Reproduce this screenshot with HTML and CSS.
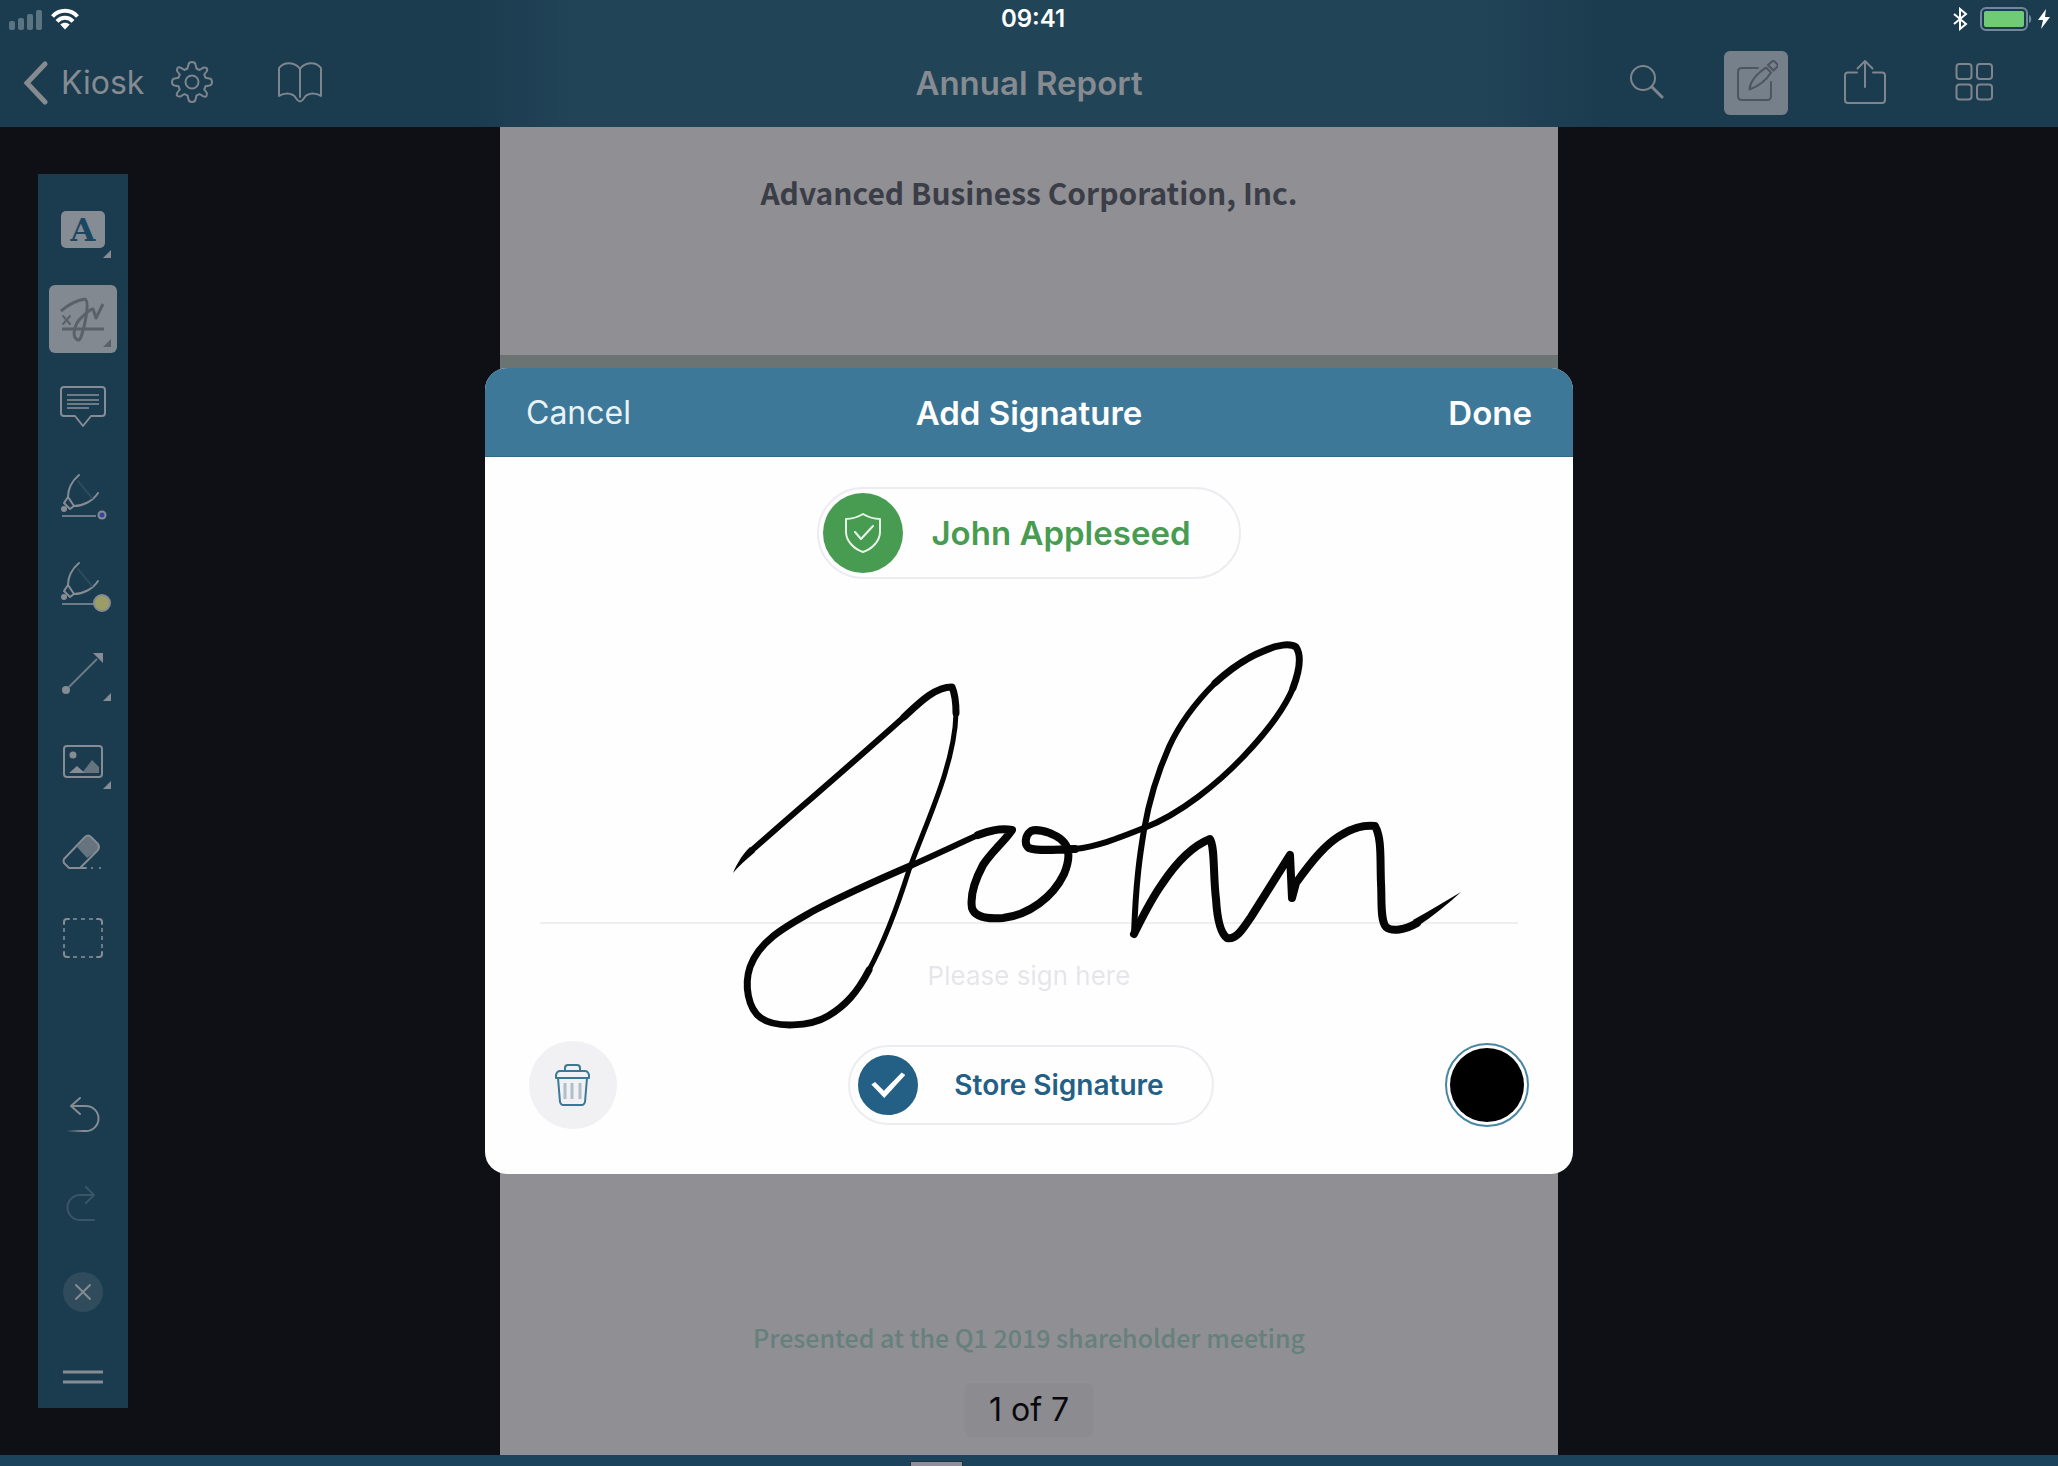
FILE: index.html
```html
<!DOCTYPE html>
<html lang="en">
<head>
<meta charset="utf-8">
<meta name="viewport" content="width=device-width, initial-scale=1">
<title>Annual Report</title>
<link rel="stylesheet" href="styles.css">
</head>
<body>
<div class="app">
  <header class="topbar">
    <div class="status">
      <div class="status-side">
        <svg class="signal" width="36" height="22" viewBox="0 0 36 22" aria-hidden="true"><rect x="1" y="13" width="6" height="9" rx="2"/><rect x="10" y="10" width="6" height="12" rx="2"/><rect x="19" y="6" width="6" height="16" rx="2"/><rect x="28" y="2" width="6" height="20" rx="2"/></svg>
        <svg class="wifi" width="30" height="22" viewBox="0 0 30 22" aria-hidden="true"><path class="arc" d="M2.5 8.5C9.500 .9 20.500 .9 27.500 8.500M7 13.300C11.500 8.500 18.500 8.500 23 13.300"/><path d="M15 21.500L10.300 16.500C13 14.100 17 14.100 19.700 16.500Z"/></svg>
      </div>
      <time class="clock">09:41</time>
      <div class="status-side status-end">
        <svg width="16" height="24" viewBox="0 0 16 24" aria-hidden="true"><path class="bt" d="M2 7L14 17L8 22V2L14 7L2 17"/></svg>
        <svg width="52" height="24" viewBox="0 0 52 24" aria-hidden="true"><rect class="cell" x="1" y="1" width="46" height="22" rx="5"/><rect class="charge" x="4" y="4" width="40" height="16" rx="2"/><path class="cap" d="M49 8C52 9 52 15 49 16Z"/></svg>
        <svg width="12" height="20" viewBox="0 0 12 20" aria-hidden="true"><path class="bolt" d="M8 0L0 11H5L3 20L12 8H7Z"/></svg>
      </div>
    </div>
    <nav class="nav">
      <div class="nav-left">
        <a class="back" href="#"><svg width="26" height="44" viewBox="0 0 26 44" aria-hidden="true"><path d="M22 3L4 22L22 41"/></svg>Kiosk</a>
        <button class="icon-button gear" aria-label="Settings"><svg width="42" height="42" viewBox="-21 -21 42 42"><circle r="6.500"/><path d="M-3.500 -17.500Q-3 -20 0 -20T3.500 -17.500L4.500 -13.500Q6.500 -12.500 7.500 -12L11 -14.200Q13 -15 14.500 -14T14.600 -10.500L12.200 -7.500Q13 -6 13.500 -4.200L17.500 -3.500Q20 -3 20 0T17.500 3.500L13.500 4.200Q13 6 12.200 7.500L14.600 10.500Q15.500 12.500 14.500 14T11 14.200L7.500 12Q6.500 12.800 4.500 13.500L3.500 17.500Q3 20 0 20T-3.500 17.500L-4.500 13.500Q-6.500 12.800 -7.500 12L-11 14.200Q-13 15 -14.500 14T-14.600 10.500L-12.200 7.500Q-13 6 -13.500 4.200L-17.500 3.500Q-20 3 -20 0T-17.500 -3.500L-13.500 -4.200Q-13 -6 -12.200 -7.500L-14.600 -10.500Q-15.500 -12.500 -14.500 -14T-11 -14.200L-7.500 -12Q-6.500 -12.800 -4.500 -13.500Z"/></svg></button>
        <button class="icon-button" aria-label="Reader view"><svg width="44" height="42" viewBox="-22 -21 44 42"><path d="M0 -13C-5 -20.500 -16 -20.500 -21 -14V14C-17 11 -11 11 -7 13C-4 14 -4 19 0 19.500C4 19 4 14 7 13C11 11 17 11 21 14V-14C16 -20.500 5 -20.500 0 -13V15"/></svg></button>
      </div>
      <h1 class="doc-title">Annual Report</h1>
      <div class="nav-right">
        <button class="icon-button" aria-label="Search"><svg width="34" height="34" viewBox="0 0 34 34"><circle cx="13" cy="13" r="12"/><path class="thick" d="M22 22L32 32"/></svg></button>
        <button class="icon-button active" aria-label="Annotate" aria-pressed="true"><svg width="44" height="44" viewBox="-22 -22 44 44"><path d="M2 -14H-14Q-18 -14 -18 -10V14Q-18 18 -14 18H11Q15 18 15 14V0M10 -14.500L15 -9.500C11 -3 3 4 -6.500 7.500C-6 -1 2 -9 10 -14.500ZM12 -17L16.500 -21Q17.500 -21.500 18.500 -20.500L21.500 -17.500Q22 -16.500 21.500 -15.500L17.500 -11.500Z"/></svg></button>
        <button class="icon-button" aria-label="Share"><svg width="44" height="46" viewBox="-22 -25 44 46"><path d="M-8 -11.500H-17Q-20 -11.500 -20 -8.500V16Q-20 19 -17 19H17Q20 19 20 16V-8.500Q20 -11.500 17 -11.500H8M0 3V-23M-7.500 -15.500L0 -23L7.500 -15.500"/></svg></button>
        <button class="icon-button" aria-label="Thumbnails"><svg width="40" height="40" viewBox="-20 -20 40 40"><rect x="-17.500" y="-18" width="15" height="15" rx="3"/><rect x="3" y="-18" width="15" height="15" rx="3"/><rect x="-17.500" y="2.500" width="15" height="15" rx="3"/><rect x="3" y="2.500" width="15" height="15" rx="3"/></svg></button>
      </div>
    </nav>
  </header>

  <main class="workspace">
    <div class="toolbar" role="toolbar" aria-label="Annotation tools">
      <button class="tool" aria-label="Text"><svg viewBox="-34 -34 68 68"><rect class="fill" x="-22" y="-19" width="44" height="37" rx="5"/><text class="glyph" x="0" y="11" text-anchor="middle">A</text><path class="fill" d="M20 28H28V20Z"/></svg></button>
      <button class="tool selected" aria-label="Signature" aria-pressed="true"><svg viewBox="-34 -34 68 68"><path class="mid" d="M-22 -8C-14 -15 -4 -19 2 -20C8 -17 -1 20 -4 21C-13 20 -8 4 -2 -1C4 -7 8 -10 10 -10L13 -1L20 -15M-21 10H21"/><path d="M-20 -3L-13 5M-13 -3L-20 5"/><path class="fill" d="M20 28H28V20Z"/></svg></button>
      <button class="tool" aria-label="Note"><svg viewBox="-34 -34 68 68"><path d="M-19 -20H19Q22 -20 22 -17V6Q22 9 19 9H8L0 19L-8 9H-19Q-22 9 -22 6V-17Q-22 -20 -19 -20Z"/><path class="soft" d="M-16 -12H16M-16 -7H16M-16 -3H16M-16 1H6"/></svg></button>
      <button class="tool" aria-label="Pen"><svg viewBox="-34 -34 68 68"><path d="M-4 -21C-11 -15 -15 -8 -15 1L-19 7L-13 13L-9 10C0 10 10 5 15 -3M-15 1L-9 10"/><path class="faint" d="M-5 -15L9 2"/><circle class="fill" cx="-19" cy="13" r="3"/><path class="soft" d="M-21 20H13"/><circle class="fill" cx="19" cy="19" r="4.500"/><circle class="blue" cx="19" cy="19" r="2.500"/></svg></button>
      <button class="tool" aria-label="Highlighter"><svg viewBox="-34 -34 68 68"><path d="M-4 -21C-11 -15 -15 -8 -15 1L-19 7L-13 13L-9 10C0 10 10 5 15 -3M-15 1L-9 10"/><path class="faint" d="M-5 -15L9 2"/><circle class="fill" cx="-19" cy="13" r="3"/><path class="soft" d="M-21 20H13"/><circle class="yellow" cx="19" cy="19" r="8"/></svg></button>
      <button class="tool" aria-label="Line"><svg viewBox="-34 -34 68 68"><path class="soft" d="M-14 14L14 -14"/><circle class="fill" cx="-17" cy="17" r="4"/><path class="fill" d="M10 -20H20V-10ZM20 28H28V20Z"/></svg></button>
      <button class="tool" aria-label="Image"><svg viewBox="-34 -34 68 68"><rect x="-19" y="-15" width="38" height="31" rx="3"/><circle class="fill" cx="-10" cy="-6" r="3.500"/><path class="fill dim" d="M-1 12L9 -1L16 6V12Z"/><path class="fill" d="M-14 12L-6 5L2 12ZM20 28H28V20Z"/></svg></button>
      <button class="tool" aria-label="Eraser"><svg viewBox="-34 -34 68 68"><path class="fill dim" d="M-6 -3L3 -13Q5 -15 8 -13L15 -6Q17 -3 15 0L4 8Z"/><path d="M-19 9L2 -13Q5 -16 8 -13L15 -6Q17 -3 15 0L-3 18H-14L-19 13Q-20 11 -19 9ZM-14 18H3"/><path class="soft" d="M8 18H10M16 18H18"/></svg></button>
      <button class="tool" aria-label="Select"><svg viewBox="-34 -34 68 68"><path d="M-19 -14V-16Q-19 -19 -16 -19H-14M14 -19H16Q19 -19 19 -16V-14M19 14V16Q19 19 16 19H14M-14 19H-16Q-19 19 -19 16V14"/><path class="soft" d="M-10 -19H-6M-2 -19H2M6 -19H10M-10 19H-6M-2 19H2M6 19H10M-19 -10V-6M-19 -2V2M-19 6V10M19 -10V-6M19 -2V2M19 6V10"/></svg></button>
      <span class="tool-space"></span>
      <button class="tool" aria-label="Undo"><svg viewBox="-34 -34 68 68"><defs><linearGradient id="tail" gradientUnits="userSpaceOnUse" x1="-17" y1="0" x2="0" y2="0"><stop offset="0" stop-color="#858c93" stop-opacity="0"/><stop offset="1" stop-color="#858c93"/></linearGradient></defs><path d="M-3 -17L-12 -9L-3 -1M-12 -9H3A12.500 12.500 0 0 1 3 16H0"/><path class="tail" d="M0 16.010L-16 16"/></svg></button>
      <button class="tool muted" aria-label="Redo"><svg viewBox="-34 -34 68 68"><path d="M3 -16L11 -8L3 0M11 -8H-3A12.500 12.500 0 0 0 -3 17H11"/></svg></button>
      <button class="tool" aria-label="Close"><svg viewBox="-34 -34 68 68"><circle class="disc" r="20"/><path d="M-7 -7L7 7M7 -7L-7 7"/></svg></button>
      <button class="tool handle" aria-label="Move toolbar"><svg viewBox="-34 -34 68 68"><path class="mid" d="M-20 0H20M-20 10H20"/></svg></button>
    </div>

    <article class="document">
      <section class="sheet sheet-head"><h2 class="company">Advanced Business Corporation, Inc.</h2></section>
      <section class="sheet sheet-foot">
        <p class="meeting">Presented at the Q1 2019 shareholder meeting</p>
        <p class="page-count">1 of 7</p>
      </section>
    </article>
  </main>
  <footer class="scrubber"><span class="thumb"></span></footer>
</div>

<div class="overlay">
  <form class="dialog" role="dialog" aria-label="Add Signature">
    <header class="dialog-head">
      <button type="button" class="text-button">Cancel</button>
      <h2 class="dialog-title">Add Signature</h2>
      <button type="button" class="text-button done">Done</button>
    </header>
    <div class="dialog-body">
      <button type="button" class="pill signer">
        <span class="badge"><svg width="36" height="40" viewBox="0 0 36 40" aria-hidden="true"><path d="M18 1C13 4 7 6 1 6V19C1 28 9 36 18 39C27 36 35 28 35 19V6C29 6 23 4 18 1ZM10 19L16 26L28 13"/></svg></span>
        John Appleseed
      </button>
      <div class="pad">
        <p class="hint">Please sign here</p>
        <svg class="ink" viewBox="485 579 1088 462" aria-label="Signature">
          <path class="tip" d="M733 873C736 865 742 855 750 847L755 852C747 859 740 865 733 873Z"/>
          <path class="w6" d="M751 851C792 815 864 753 904 717"/>
          <path class="w7" d="M904 717C920 702 935 687 952 687C955 694 956 704 956 713"/>
          <path class="w5" d="M956 713C955 765 925 825 909 870C897 908 883 944 869 970"/>
          <path class="w7" d="M869 970C857 993 845 1006 828 1016C810 1027 775 1028 761 1018C748 1009 744 985 750 967C760 939 789 925 815 910C850 892 882 878 910 866"/>
          <path class="w6" d="M910 866C935 855 960 843 978 835"/>
          <path class="w8" d="M978 835C991 830 1002 828 1012 830C1004 842 992 851 983 865C975 880 970 896 972 908C975 918 990 919 1003 918C1029 915 1053 897 1064 874C1072 855 1069 843 1056 836C1046 831 1036 829 1031 831C1025 835 1024 845 1029 848C1036 851 1055 850 1075 849"/>
          <path class="w6" d="M1075 849C1100 846 1121 837 1144 828C1181 814 1219 782 1242 758C1264 735 1284 710 1293 688"/>
          <path class="w7" d="M1293 688C1299 672 1302 656 1296 647C1290 643 1277 645 1266 650C1245 658 1229 670 1215 683"/>
          <path class="w6" d="M1215 683C1194 704 1179 725 1169 747C1157 774 1149 801 1144 830C1140 854 1136 880 1134 934"/>
          <path class="w8" d="M1134 934C1141 920 1150 901 1162 884C1176 863 1192 846 1210 839C1215 847 1213 875 1216 899C1217 916 1220 933 1227 938C1236 940 1243 929 1251 917C1264 896 1277 876 1290 855L1292 898L1296 883C1311 862 1326 843 1343 834C1353 828 1365 825 1375 826C1382 838 1380 860 1381 883C1382 900 1380 920 1386 927C1392 932 1405 930 1417 923"/>
          <path class="tip" d="M1413 920C1430 911 1445 901 1461 892C1448 904 1433 916 1418 926Z"/>
        </svg>
      </div>
      <div class="actions">
        <button type="button" class="trash" aria-label="Clear signature"><svg width="36" height="42" viewBox="0 0 36 42"><path d="M10 7V4Q10 1 13 1H22Q25 1 25 4V7M5 7H30Q33 7 34 11V14H1V11Q2 7 5 7ZM3 14L5 38Q6 41 8 41H27Q29 41 30 38L32 14"/><path class="slats" d="M10 19V35M17 19V35M25 19V35"/></svg></button>
        <label class="pill store"><input class="store-input" type="checkbox" checked>Store Signature</label>
        <button type="button" class="swatch" aria-label="Ink colour: black"><span class="swatch-dot"></span></button>
      </div>
    </div>
  </form>
</div>
</body>
</html>
```

FILE: styles.css
```css
:root {
  --bar: #1b3b4f;
  --icon: #7e858c;
  --blue: #246085;
  --green: #489c51;
}

* { box-sizing: border-box; }

body {
  margin: 0;
  background: #0f1016;
  font-family: Inter, "Liberation Sans", sans-serif;
  font-size: 32px;
  line-height: 40px;
}

h1, h2, p { margin: 0; font-size: inherit; font-weight: inherit; }

button {
  margin: 0;
  padding: 0;
  border: 0;
  background: none;
  color: inherit;
  font: inherit;
  cursor: pointer;
}

svg { display: block; fill: none; }

.app {
  display: flex;
  flex-direction: column;
  min-height: 100vh;
}

/* Status and navigation bars */
.topbar {
  background: linear-gradient(90deg, var(--bar) 23%, #224457 28%, #224457 72%, var(--bar) 78%);
}

.status {
  display: grid;
  grid-template-columns: 1fr auto 1fr;
  align-items: center;
  height: 38px;
  padding: 0 8px;
  color: #fff;
}

.status-side { display: flex; align-items: center; gap: 6px; }
.status-end { justify-content: flex-end; }
.signal { fill: #5a7482; }
.wifi { fill: #fff; }
.arc { fill: none; stroke: #fff; stroke-width: 4; }
.bt { stroke: #fff; stroke-width: 2; }
.status-end svg:first-child { margin-right: 6px; }
.cell { stroke: #71889a; stroke-width: 2; }
.charge { fill: #70cb75; }
.cap { fill: #71889a; }
.bolt { fill: #fff; }
.clock {
  padding-left: 8px;
  font-size: 24px;
  font-weight: 600;
  line-height: 32px;
}

.nav {
  display: grid;
  grid-template-columns: 1fr auto 1fr;
  align-items: center;
  height: 89px;
  color: #858b91;
}

.nav-left { display: flex; align-items: center; padding-left: 23px; }
.nav-right { display: flex; justify-content: flex-end; gap: 45px; padding-right: 52px; }

.back {
  display: flex;
  align-items: center;
  gap: 12px;
  color: inherit;
  text-decoration: none;
}
.back svg { stroke: currentColor; stroke-width: 5; stroke-linecap: round; }

.icon-button {
  display: flex;
  align-items: center;
  justify-content: center;
  width: 64px;
  height: 64px;
  padding-bottom: 2px;
  border-radius: 6px;
}
.icon-button svg { stroke: var(--icon); stroke-width: 2; stroke-linecap: round; stroke-linejoin: round; }
.icon-button .thick { stroke-width: 3; }
.icon-button.gear { margin: 0 44px 0 16px; }
.icon-button.active { background: #76808a; }
.icon-button.active svg { stroke: #4c5560; }

.doc-title { font-size: 33px; font-weight: 600; }

/* Document area */
.workspace {
  flex: 1;
  display: grid;
  grid-template-columns: 1fr minmax(0, 1058px) 1fr;
}

.toolbar {
  display: flex;
  flex-direction: column;
  width: 90px;
  margin: 47px 38px;
  padding-top: 12px;
  background: var(--bar);
}

.tool {
  flex: 1;
  display: flex;
  align-items: center;
  justify-content: center;
}
.tool-space { flex: 1; }
.tool.handle { flex: 0 0 72px; }
.tool svg {
  width: 68px;
  height: 68px;
  border-radius: 6px;
  stroke: #858c93;
  stroke-width: 2;
  stroke-linecap: round;
  stroke-linejoin: round;
}
.tool .fill { fill: #858c93; stroke: none; }
.tool .dim { fill: #66747f; }
.tool .soft { stroke: #6d7b86; stroke-linecap: butt; }
.tool .faint { stroke: #2c4b5d; }
.tool .mid { stroke-width: 3; stroke-linecap: butt; }
.tool .disc { fill: #2f4b5c; stroke: none; }
.tool .blue { fill: #3a44a0; stroke: none; }
.tool .yellow { fill: #9c9c66; stroke: #858c93; }
.tool .tail { stroke: url(#tail); }
.tool .glyph {
  fill: #1b4860;
  stroke: none;
  font-family: "DejaVu Serif", serif;
  font-size: 32px;
  font-weight: 700;
}
.tool.selected svg { background: #838990; stroke: #5b6169; }
.tool.selected .fill { fill: #5b6169; }
.tool.muted svg { stroke: #3a5566; }

.document {
  grid-column: 2;
  display: flex;
  flex-direction: column;
  gap: 20px;
  background: #6b7473;
}

.sheet {
  background: #8f8f94;
  font-family: "Noto Sans CJK SC", "Noto Sans", sans-serif;
  text-align: center;
}
.sheet-head { height: 228px; padding-top: 45px; }
.sheet-foot {
  flex: 1;
  display: flex;
  flex-direction: column;
  align-items: center;
  justify-content: flex-end;
  gap: 26px;
  padding-bottom: 18px;
}
.company { color: #3b3d47; font-size: 30px; font-weight: 700; }
.meeting { color: #66807c; font-size: 25px; font-weight: 500; }
.page-count {
  padding: 7px 24px;
  border-radius: 6px;
  background: #8b8b90;
  color: #09090c;
  font-family: Inter, "Liberation Sans", sans-serif;
}

.scrubber {
  display: flex;
  align-items: flex-end;
  height: 11px;
  padding-left: 910px;
  background: #1b435b;
}
.thumb {
  width: 53px;
  height: 5px;
  border: solid #26303c;
  border-width: 1px 1px 0;
  background: #8f8f9a;
}

/* Signature dialog */
.overlay {
  position: fixed;
  inset: 0;
  display: flex;
  align-items: flex-start;
  justify-content: center;
  padding-top: 368px;
}

.dialog {
  width: 100%;
  max-width: 1088px;
  overflow: hidden;
  border-radius: 22px;
  background: #fefefe;
}

.dialog-head {
  display: grid;
  grid-template-columns: 1fr auto 1fr;
  align-items: center;
  height: 89px;
  padding: 2px 41px 0;
  border-bottom: 1px solid #336985;
  background: #3e7898;
  color: #fff;
}
.text-button { justify-self: start; color: #eaf2f6; }
.text-button.done { justify-self: end; color: #fff; font-size: 33px; font-weight: 600; }
.dialog-title { font-size: 33px; font-weight: 600; }

.dialog-body {
  display: flex;
  flex-direction: column;
  align-items: center;
  padding: 30px 44px 45px;
}

.pill {
  display: flex;
  align-items: center;
  border: 2px solid #eeecf0;
  border-radius: 46px;
  font-weight: 600;
}

.signer {
  gap: 28px;
  height: 92px;
  padding: 0 48px 0 4px;
  color: var(--green);
  font-size: 33px;
}

.badge {
  display: flex;
  align-items: center;
  justify-content: center;
  width: 80px;
  height: 80px;
  border-radius: 50%;
  background: var(--green);
}
.badge svg { stroke: #e8f5e9; stroke-width: 2; stroke-linecap: round; stroke-linejoin: round; }

.pad {
  position: relative;
  align-self: stretch;
  height: 462px;
  margin: 0 -44px;
  padding: 343px 55px 0;
}
.hint {
  padding-top: 32px;
  border-top: 2px solid #efeff0;
  color: #e6e5ea;
  font-size: 26px;
  text-align: center;
}
.ink {
  position: absolute;
  inset: 0;
  width: 100%;
  height: 100%;
  stroke: #050505;
  stroke-linecap: round;
  stroke-linejoin: round;
}
.w5 { stroke-width: 5; }
.w6 { stroke-width: 6; }
.w7 { stroke-width: 7; }
.w8 { stroke-width: 8; }
.tip { fill: #050505; stroke: none; }

.actions {
  align-self: stretch;
  display: flex;
  align-items: center;
  justify-content: space-between;
}

.trash {
  display: flex;
  align-items: center;
  justify-content: center;
  width: 88px;
  height: 88px;
  border-radius: 50%;
  background: #f1f0f2;
}
.trash svg { stroke: #3a7896; stroke-width: 2; stroke-linejoin: round; }
.trash .slats { stroke: #aebfca; stroke-width: 3; }

.store {
  gap: 36px;
  height: 80px;
  padding: 0 48px 0 8px;
  color: var(--blue);
  font-size: 28px;
}
.store-input {
  appearance: none;
  display: grid;
  place-items: center;
  width: 60px;
  height: 60px;
  margin: 0;
  border: 2px solid var(--blue);
  border-radius: 50%;
}
.store-input:checked { background: var(--blue); }
.store-input:checked::before {
  content: "";
  width: 34px;
  height: 26px;
  background: #fff;
  clip-path: polygon(0 48%, 11% 38%, 37% 72%, 89% 2%, 100% 12%, 38% 100%);
}

.swatch {
  display: flex;
  align-items: center;
  justify-content: center;
  width: 84px;
  height: 84px;
  border: 2px solid #4a86a2;
  border-radius: 50%;
}
.swatch-dot {
  width: 74px;
  height: 74px;
  border-radius: 50%;
  background: #000;
}
```
